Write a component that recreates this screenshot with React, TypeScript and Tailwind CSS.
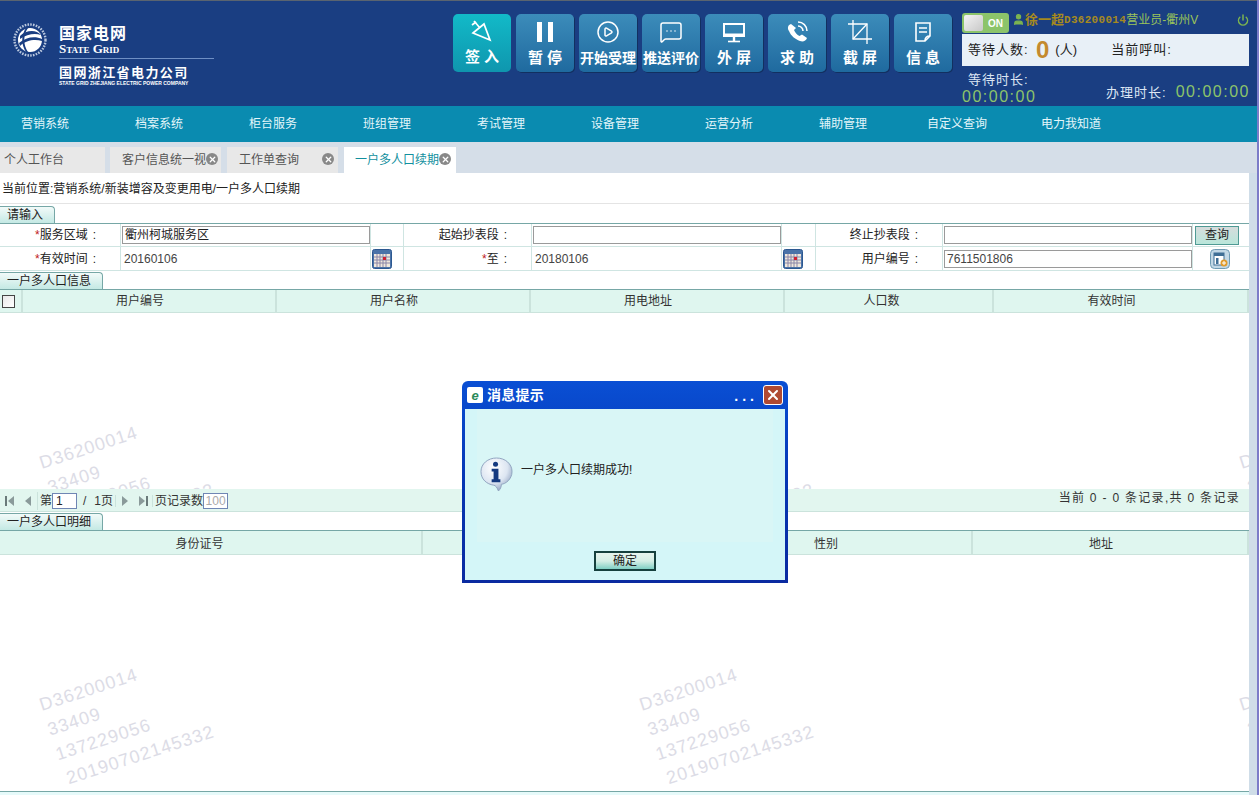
import React from "react";
import { CirclePlay, MessageSquareMore, Power, User, X } from "lucide-react";

const FONT = { fontFamily: '"Liberation Sans", "Noto Sans CJK SC", sans-serif' };

const navItems = ["营销系统", "档案系统", "柜台服务", "班组管理", "考试管理", "设备管理", "运营分析", "辅助管理", "自定义查询", "电力我知道"];

const SignIcon = () => (
  <svg width="22" height="22" viewBox="0 0 22 22" fill="none" stroke="white" strokeWidth="1.7">
    <path d="M2 13 L13 4 L19 20 Z" />
    <path d="M3 1 L9 8" />
    <path d="M1 5 L5 2" />
  </svg>
);

const PauseIcon = () => (
  <div className="flex gap-[6px] h-[20px]">
    <div className="w-[5px] h-[20px] bg-white" />
    <div className="w-[5px] h-[20px] bg-white" />
  </div>
);

const NoteIcon = () => (
  <svg width="22" height="22" viewBox="0 0 22 22" fill="none" stroke="white" strokeWidth="1.6">
    <path d="M4 2 H18 V15 L13 20 H4 Z" />
    <path d="M7 7 H15 M7 11 H15 M13 20 C13 16 15 15 18 15" />
  </svg>
);

const ScreenIcon = () => (
  <svg width="24" height="24" viewBox="0 0 24 24" fill="none" stroke="white">
    <path d="M2 4 H22 V16 H2 Z" strokeWidth="2" />
    <path d="M2 15 H22" strokeWidth="3" />
    <path d="M12 17 V21" strokeWidth="2.4" />
    <path d="M6 21.5 H18" strokeWidth="1.6" />
  </svg>
);

const PhoneIcon = () => (
  <svg width="24" height="24" viewBox="0 0 24 24" fill="none">
    <path d="M6 4 C3 5 2 8 4 11 C6 16 10 19 15 21 C18 22 21 21 22 18 L17 14.5 L14.5 16 C12 15 10 12.5 9 10 L11 8 Z" fill="white" />
    <path d="M13 2 A9 9 0 0 1 22 11 M13 6 A5 5 0 0 1 18 11" stroke="white" strokeWidth="1.5" />
  </svg>
);

const CropIcon = () => (
  <svg width="24" height="24" viewBox="0 0 24 24" fill="none" stroke="white" strokeWidth="1.3">
    <path d="M5 0 V19 H24" />
    <path d="M0 4 H19 V24" />
    <path d="M5 19 L19 4" />
  </svg>
);

const toolButtons = [
  { label: "暂 停", icon: <PauseIcon />, className: "text-[15px]" },
  { label: "开始受理", icon: <CirclePlay size={24} strokeWidth={1.5} color="white" />, className: "text-[14px]" },
  { label: "推送评价", icon: <MessageSquareMore size={24} strokeWidth={1.5} color="white" />, className: "text-[14px]" },
  { label: "外 屏", icon: <ScreenIcon />, className: "text-[15px]" },
  { label: "求 助", icon: <PhoneIcon />, className: "text-[15px]" },
  { label: "截 屏", icon: <CropIcon />, className: "text-[15px]" },
  { label: "信 息", icon: <NoteIcon />, className: "text-[15px]" },
];

const Logo = () => (
  <svg width="34" height="34" viewBox="0 0 34 34" fill="none">
    <circle cx="17" cy="17" r="15.5" stroke="#b9c7de" strokeWidth="2.4" strokeDasharray="1.6 1.2" />
    <circle cx="17" cy="17" r="12" fill="white" />
    <path d="M7 13 C13 7 23 6 28 12 C22 10 14 11 7 16 Z" fill="#1a3e82" />
    <path d="M6 20 C13 14 22 13 29 16 L29 18 C22 16 13 17 7 23 Z" fill="#1a3e82" />
    <path d="M15 5 C10 12 10 22 15 29 L13 29 C8 22 8 12 13 5 Z" fill="#1a3e82" />
  </svg>
);

const CalendarIcon = () => (
  <svg width="20" height="20" viewBox="0 0 20 20">
    <rect x="0.5" y="0.5" width="19" height="19" rx="2" fill="#4b73a8" stroke="#2c5890" />
    <rect x="2" y="5" width="16" height="13" fill="#efe8dc" />
    <path d="M2 8 H18 M2 11 H18 M2 14 H18 M5 5 V18 M8 5 V18 M11 5 V18 M14 5 V18" stroke="#8a86a8" strokeWidth="1" />
    <rect x="11" y="8" width="3" height="3" fill="#d02030" />
  </svg>
);

const LookupIcon = () => (
  <svg width="20" height="20" viewBox="0 0 20 20">
    <rect x="0.5" y="0.5" width="19" height="19" rx="4" fill="#c2d8e6" stroke="#6f9bb4" />
    <rect x="4" y="4" width="10" height="12" fill="white" stroke="#3f6f96" />
    <rect x="4" y="4" width="10" height="3" fill="#3f6f96" />
    <rect x="6" y="9" width="2.5" height="6" fill="#3f6f96" />
    <circle cx="14" cy="14" r="3.5" fill="#e09a2c" />
    <path d="M12 14 H16 M14 12 V16" stroke="white" strokeWidth="1" />
  </svg>
);

const Watermark = ({ className }: { className: string }) => (
  <div className={`absolute origin-top-left -rotate-[18deg] text-[18px] leading-[26px] tracking-[1px] text-[#dcdce6] whitespace-nowrap select-none ${className}`}>
    <div>D36200014</div>
    <div>33409</div>
    <div>137229056</div>
    <div className="pl-[3px]">20190702145332</div>
  </div>
);

const SectionTab = ({ label, width }: { label: string; width: string }) => (
  <div className={`${width} h-[17px] leading-[17px] text-[12px] pl-[7px] text-[#222] bg-gradient-to-b from-[#f2faf9] to-[#c4e9e4] border-r border-t border-[#76a7a6] rounded-tr-[4px] whitespace-nowrap`}>
    {label}
  </div>
);

const TextField = ({ value, dark }: { value?: string; dark?: boolean }) => (
  <div className={`h-[18px] w-[249px] border border-[#9a9a9a] px-[2px] leading-[17px] text-[12px] ${dark ? "text-[#222]" : "text-[#444]"}`}>
    {value}
  </div>
);

const Label = ({ children, star }: { children: React.ReactNode; star?: boolean }) => (
  <div className="h-full flex items-center justify-end pr-[24px] text-[12px] text-[#222] border-r border-b border-[#cfe5e2]">
    {star && <span className="text-[#c02020]">*</span>}
    {children}
    <span className="ml-[5px]">:</span>
  </div>
);

const Cell = ({ children, className = "" }: { children?: React.ReactNode; className?: string }) => (
  <div className={`h-full flex items-center border-r border-b border-[#cfe5e2] ${className}`}>{children}</div>
);

const HeaderCell = ({ label, className }: { label: string; className: string }) => (
  <div className={`${className} h-full flex items-center justify-center border-r-2 border-[#cbe3dc] text-[12px] text-[#333]`}>{label}</div>
);

const PagerArrow = ({ dir, stop }: { dir: "l" | "r"; stop?: boolean }) => (
  <svg width="10" height="12" viewBox="0 0 10 12">
    {dir === "l" ? <path d="M9 1 V11 L3 6 Z" fill="#8a9a9a" /> : <path d="M1 1 V11 L7 6 Z" fill="#8a9a9a" />}
    {stop && (dir === "l" ? <rect x="0" y="1" width="2" height="10" fill="#6a7a7a" /> : <rect x="8" y="1" width="2" height="10" fill="#6a7a7a" />)}
  </svg>
);

const InfoIcon = () => (
  <svg width="33" height="35" viewBox="0 0 34 36">
    <defs>
      <radialGradient id="bub" cx="40%" cy="30%" r="75%">
        <stop offset="0%" stopColor="#ffffff" />
        <stop offset="60%" stopColor="#dde6f2" />
        <stop offset="100%" stopColor="#8c9fbe" />
      </radialGradient>
    </defs>
    <path d="M17 1 C26 1 33 7 33 15 C33 23 26 28 22 28 C22 31 21 33 19 35 C18 32 16 29 14 29 C7 28 1 23 1 15 C1 7 8 1 17 1 Z" fill="url(#bub)" stroke="#8fa3bf" />
    <circle cx="16" cy="7.5" r="2.6" fill="#143a80" />
    <path d="M12 12 H19 V23 H21 V26 H12 V23 H14 V15 H12 Z" fill="#143a80" />
  </svg>
);

const TabClose = ({ className }: { className: string }) => (
  <div className={`absolute top-[6px] w-[12px] h-[12px] rounded-full bg-[#888] flex items-center justify-center ${className}`}>
    <X size={9} strokeWidth={3.5} color="white" />
  </div>
);

const Dialog = () => (
  <div className="absolute left-[462px] top-[381px] w-[326px] h-[202px] rounded-t-[6px] bg-gradient-to-b from-[#0a4fd4] via-[#0636b4] to-[#0a2aa0] p-[3px] pt-0 flex flex-col">
    <div className="h-[28px] flex items-center pl-[2px] pr-[2px] shrink-0">
      <div className="w-[16px] h-[16px] rounded-[2px] bg-white flex items-center justify-center text-[#2a8a5a] text-[13px] font-bold leading-none italic">e</div>
      <span className="ml-[4px] text-white font-bold text-[14px] tracking-[0.25px] mt-[1px]">消息提示</span>
      <span className="ml-auto mr-[5px] text-white font-bold text-[14px] tracking-[4px] mt-[2px]">...</span>
      <div className="w-[20px] h-[20px] rounded-[3px] bg-[#b04a32] border border-white flex items-center justify-center">
        <X size={16} strokeWidth={3} color="white" />
      </div>
    </div>
    <div className="flex-1 bg-[#d4f6f8] flex flex-col items-center px-[12px] pb-[9px]">
      <div className="w-full flex-1 bg-[#d9f6f6] flex items-start pt-[48px] pl-[3px] gap-[8px]">
        <InfoIcon />
        <span className="text-[12px] text-[#222] mt-[4px]">一户多人口续期成功!</span>
      </div>
      <div className="w-[62px] h-[20px] border-2 border-[#16403e] bg-gradient-to-b from-[#e6f4ee] via-[#d5eee6] to-[#7fcfc4] flex items-center justify-center text-[12px] text-[#222] mt-[9px]">
        确定
      </div>
    </div>
  </div>
);

const App = () => {
  return (
    <div className="relative w-[1260px] h-[795px] overflow-hidden bg-white flex" style={FONT}>
      <div className="w-[1257px] shrink-0 flex flex-col">
        <header className="h-[106px] bg-[#1a3e82] border-t border-[#5a6470] flex">
          <div className="w-[453px] shrink-0 flex items-start pl-[13px] pt-[22px] gap-[12px]">
            <Logo />
            <div className="text-white w-[155px] pt-[1px]">
              <div className="text-[16px] font-bold leading-[19px] tracking-[1px]">国家电网</div>
              <div className="text-[13px] font-bold leading-[12px] [font-variant:small-caps] whitespace-nowrap" style={{ fontFamily: '"Liberation Serif", serif' }}>State Grid</div>
              <div className="h-[1px] bg-[#6f8fc4] mt-[3px]" />
              <div className="text-[13px] font-bold leading-[15px] mt-[6px] tracking-[1.4px] whitespace-nowrap">国网浙江省电力公司</div>
              <div className="text-[5px] font-bold leading-[6px] whitespace-nowrap">STATE GRID ZHEJIANG ELECTRIC POWER COMPANY</div>
            </div>
          </div>
          <div className="flex gap-[5px] pt-[13px] items-start">
            <div className="w-[58px] h-[58px] rounded-[5px] bg-gradient-to-b from-[#12bac8] to-[#0f96ae] flex flex-col items-center pt-[6px] text-white font-bold">
              <SignIcon />
              <span className="text-[15px] leading-[20px] mt-[5px]">签 入</span>
            </div>
            {toolButtons.map((b) => (
              <div key={b.label} className="w-[58px] h-[58px] rounded-[5px] bg-gradient-to-b from-[#3c8cba] to-[#1f6a9f] shadow-[1px_1px_0_#123060] flex flex-col items-center pt-[6px] text-white font-bold">
                <div className="h-[24px] flex items-center">{b.icon}</div>
                <span className={`${b.className} leading-[20px] mt-[4px] whitespace-nowrap`}>{b.label}</span>
              </div>
            ))}
          </div>
          <div className="ml-[10px] w-[288px] flex flex-col">
            <div className="h-[35px] flex items-start pt-[12px] pr-[1px]">
              <div className="w-[47px] h-[20px] rounded-[3px] bg-[#8cc46a] flex items-center pl-[2px] gap-[5px]">
                <div className="w-[19px] h-[16px] rounded-[2px] bg-gradient-to-br from-[#f4f4f4] to-[#c8c8c8]" />
                <span className="text-white text-[10px] font-bold">ON</span>
              </div>
              <User size={13} fill="#7cb450" color="#7cb450" className="ml-[3px]" />
              <span className="text-[13px] font-bold text-[#a68a1e] leading-[14px] whitespace-nowrap">徐一超</span>
              <span className="text-[11px] font-bold text-[#a68a1e] leading-[14px] tracking-[0.3px] whitespace-nowrap" style={{ fontFamily: '"Liberation Mono", monospace' }}>D36200014</span>
              <span className="text-[12px] text-[#9ac45a] leading-[14px] whitespace-nowrap">营业员-衢州V</span>
              <Power size={12} strokeWidth={3} color="#7cb450" className="ml-auto mt-[1px]" />
            </div>
            <div className="h-[35px] bg-[#e8f0f7] flex items-center pl-[6px] text-[13px] text-[#222] mr-[1px]">
              <span className="w-[62px] tracking-[1px] whitespace-nowrap">等待人数:</span>
              <span className="text-[24px] font-bold leading-none text-[#c48a2e] ml-[6px]">0</span>
              <span className="ml-[6px] w-[32px]">(人)</span>
              <span className="ml-[24px] tracking-[1px]">当前呼叫:</span>
            </div>
            <div className="flex items-end justify-between text-[13px] text-[#dce6f4] leading-[16px] pt-[6px]">
              <div>
                <div className="pl-[6px] tracking-[1px]">等待时长:</div>
                <div className="text-[16px] text-[#8cc46a] tracking-[1.5px] leading-[18px]">00:00:00</div>
              </div>
              <div className="whitespace-nowrap mb-[5px]">
                <span className="tracking-[1px] mr-[9px]">办理时长:</span>
                <span className="text-[16px] text-[#8cc46a] tracking-[1.5px]">00:00:00</span>
              </div>
            </div>
          </div>
        </header>

        <nav className="h-[36px] bg-[#0a8bb0] flex items-center text-[12px] text-[#e4f6fa]">
          <div className="flex -ml-[12px]">
            {navItems.map((item) => (
              <div key={item} className="w-[114px] text-center">{item}</div>
            ))}
          </div>
        </nav>

        <div className="h-[31px] bg-[#d5dee8] flex items-end text-[12px] text-[#555]">
          <div className="w-[105px] h-[26px] bg-[#e8e8e8] flex items-center pl-[4px]">个人工作台</div>
          <div className="ml-[5px] w-[111px] h-[26px] bg-[#e8e8e8] flex items-center pl-[12px] relative">
            客户信息统一视
            <TabClose className="right-[3px]" />
          </div>
          <div className="ml-[6px] w-[111px] h-[26px] bg-[#e8e8e8] flex items-center pl-[12px] relative">
            工作单查询
            <TabClose className="right-[4px]" />
          </div>
          <div className="ml-[6px] w-[112px] h-[26px] bg-white flex items-center pl-[11px] text-[#12909e] relative">
            一户多人口续期
            <TabClose className="right-[5px]" />
          </div>
        </div>

        <div className="flex flex-1 bg-[#cfdde8]">
          <main className="w-[1249px] shrink-0 flex flex-col bg-white">
            <div className="h-[30px] flex items-center pl-[2px] text-[12px] text-[#222] border-b border-[#e4e4e4] mt-[1px]">
              当前位置:营销系统/新装增容及变更用电/一户多人口续期
            </div>
            <div className="h-[18px] mt-[1px] flex items-end">
              <SectionTab label="请输入" width="w-[55px]" />
            </div>
            <div className="grid grid-cols-[121px_250px_33px_128px_250px_34px_127px_250px_56px] grid-rows-[23px_24px] border-t border-[#76a7a6] h-[48px]">
              <Label star>服务区域</Label>
              <Cell className="pl-[1px]"><TextField value="衢州柯城服务区" dark /></Cell>
              <Cell />
              <Label>起始抄表段</Label>
              <Cell className="pl-[1px]"><TextField /></Cell>
              <Cell />
              <Label>终止抄表段</Label>
              <Cell className="pl-[1px]"><TextField /></Cell>
              <div className="h-full flex items-center pl-[2px] border-b border-[#cfe5e2]">
                <div className="w-[44px] h-[19px] border border-[#4f9a94] bg-gradient-to-b from-[#d6dcdc] to-[#b8e6da] text-center leading-[17px] text-[12px] text-[#222]">查询</div>
              </div>
              <Label star>有效时间</Label>
              <Cell className="pl-[3px] text-[12px] text-[#444]">20160106</Cell>
              <Cell className="pl-[1px]"><CalendarIcon /></Cell>
              <Label star>至</Label>
              <Cell className="pl-[3px] text-[12px] text-[#444]">20180106</Cell>
              <Cell className="pl-[1px]"><CalendarIcon /></Cell>
              <Label>用户编号</Label>
              <Cell className="pl-[1px]"><TextField value="7611501806" /></Cell>
              <div className="h-full flex items-center pl-[17px] border-b border-[#cfe5e2]"><LookupIcon /></div>
            </div>

            <div className="h-[18px] flex items-end">
              <SectionTab label="一户多人口信息" width="w-[103px]" />
            </div>
            <div className="h-[24px] bg-[#dff6ef] border-t border-[#76a7a6] border-b border-b-[#cbe3dc] flex">
              <div className="w-[23px] h-full flex items-center pl-[2px] border-r-2 border-[#cbe3dc]">
                <div className="w-[13px] h-[13px] border border-[#444] bg-gradient-to-br from-[#e8e8e8] to-white" />
              </div>
              <HeaderCell label="用户编号" className="w-[254px] pr-[18px]" />
              <HeaderCell label="用户名称" className="w-[254px] pr-[18px]" />
              <HeaderCell label="用电地址" className="w-[254px] pr-[18px]" />
              <HeaderCell label="人口数" className="w-[209px] pr-[14px]" />
              <HeaderCell label="有效时间" className="flex-1 pr-[18px]" />
            </div>
            <div className="h-[176px] relative overflow-hidden">
              <Watermark className="left-[36px] top-[138px]" />
              <Watermark className="left-[636px] top-[138px]" />
              <Watermark className="left-[1236px] top-[138px]" />
            </div>
            <div className="h-[23px] bg-[#e2f6ef] border-b border-[#cbe3dc] flex items-center text-[12px] text-[#333]">
              <div className="flex items-center gap-[7px] pl-[5px] mt-[2px]">
                <PagerArrow dir="l" stop />
                <PagerArrow dir="l" />
              </div>
              <span className="ml-[5px] pl-[2px] border-l border-[#cbe3dc] mt-[2px]">第</span>
              <div className="w-[25px] h-[16px] border border-[#6f86b4] bg-white leading-[14px] pl-[3px] text-[#222] mt-[2px]">1</div>
              <span className="ml-[6px] mt-[2px]">/</span>
              <span className="ml-[8px] mt-[2px]">1页</span>
              <div className="flex items-center gap-[7px] ml-[2px] pl-[5px] pr-[4px] border-x border-[#cbe3dc] mt-[2px]">
                <PagerArrow dir="r" />
                <PagerArrow dir="r" stop />
              </div>
              <span className="ml-[2px] mt-[2px]">页记录数</span>
              <div className="w-[25px] h-[16px] border border-[#6f86b4] bg-white leading-[14px] text-center text-[#aaa] mt-[2px]">100</div>
              <span className="ml-auto mr-[9px] tracking-[1.3px] whitespace-nowrap -mt-[5px]">当前 0 - 0 条记录,共 0 条记录</span>
            </div>

            <div className="h-[18px] flex items-end">
              <SectionTab label="一户多人口明细" width="w-[103px]" />
            </div>
            <div className="h-[25px] bg-[#dff6ef] border-t border-[#76a7a6] border-b border-b-[#cbe3dc] flex">
              <HeaderCell label="身份证号" className="w-[423px] pr-[22px] pt-[3px]" />
              <HeaderCell label="姓名" className="w-[258px] pt-[3px]" />
              <HeaderCell label="性别" className="w-[292px] pt-[3px]" />
              <HeaderCell label="地址" className="flex-1 pr-[18px] pt-[3px]" />
            </div>
            <div className="flex-1 relative overflow-hidden">
              <Watermark className="left-[36px] top-[138px]" />
              <Watermark className="left-[636px] top-[138px]" />
              <Watermark className="left-[1236px] top-[138px]" />
            </div>
            <div className="h-[4px] bg-[#e6fafa] border-t border-[#76a7a6]" />
          </main>
        </div>
      </div>
      <div className="w-[2px] bg-[#7c7cc8]" />
      <div className="w-[1px] bg-white" />

      <Dialog />
    </div>
  );
};

export default App;
